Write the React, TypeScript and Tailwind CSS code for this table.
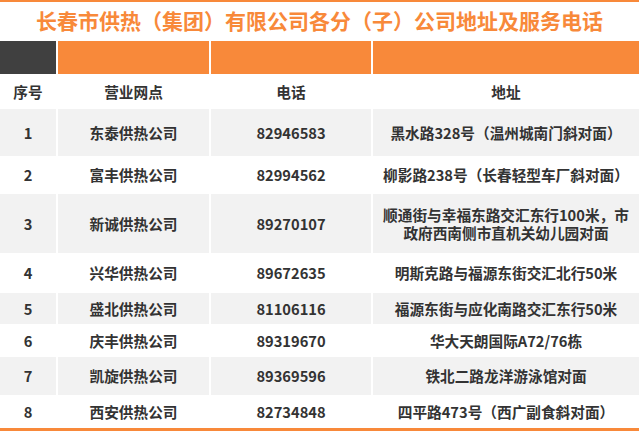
const rows = [
  { no: "1", name: "东泰供热公司", tel: "82946583", addr: "黑水路328号（温州城南门斜对面）", h: "h-[47px]" },
  { no: "2", name: "富丰供热公司", tel: "82994562", addr: "柳影路238号（长春轻型车厂斜对面）", h: "h-[38px]" },
  { no: "3", name: "新诚供热公司", tel: "89270107", addr: "顺通街与幸福东路交汇东行100米，市政府西南侧市直机关幼儿园对面", h: "h-[59px]" },
  { no: "4", name: "兴华供热公司", tel: "89672635", addr: "明斯克路与福源东街交汇北行50米", h: "h-[40px]" },
  { no: "5", name: "盛北供热公司", tel: "81106116", addr: "福源东街与应化南路交汇东行50米", h: "h-[31px]" },
  { no: "6", name: "庆丰供热公司", tel: "89319670", addr: "华大天朗国际A72/76栋", h: "h-[33px]" },
  { no: "7", name: "凯旋供热公司", tel: "89369596", addr: "铁北二路龙洋游泳馆对面", h: "h-[38px]" },
  { no: "8", name: "西安供热公司", tel: "82734848", addr: "四平路473号（西广副食斜对面）", h: "h-[33px]" },
];

const cols = "grid grid-cols-[56px_151px_160px_1fr] gap-x-[2px]";

export default function App() {
  return (
    <main
      className="w-[639px] h-[431px] overflow-hidden bg-white text-[#333333] flex flex-col"
      style={{ fontFamily: '"Noto Sans CJK SC", "Noto Sans", sans-serif' }}
    >
      {/* top accent */}
      <div className="h-[2px] bg-[#f8893a]" />

      {/* title */}
      <h1 className="h-[39px] flex items-center justify-center text-[21px] leading-none font-bold text-[#f8893a] pb-[2px]">
        长春市供热（集团）有限公司各分（子）公司地址及服务电话
      </h1>

      {/* colour band */}
      <div className={`${cols} h-[33px]`}>
        <div className="bg-[#404040]" />
        <div className="bg-[#f8893a]" />
        <div className="bg-[#f8893a]" />
        <div className="bg-[#f8893a]" />
      </div>

      {/* column heads */}
      <div className={`${cols} h-[35px] text-[14.67px] font-bold`}>
        <div className="flex items-center justify-center">序号</div>
        <div className="flex items-center justify-center">营业网点</div>
        <div className="flex items-center justify-center">电话</div>
        <div className="flex items-center justify-center">地址</div>
      </div>

      {/* body */}
      {rows.map((r, i) => {
        const bg = i % 2 === 0 ? "bg-[#f2f2f2]" : "bg-white";
        return (
          <div key={r.no} className={`${cols} ${r.h} text-[14.67px] font-bold leading-[18px]`}>
            <div className={`${bg} flex items-center justify-center`}>{r.no}</div>
            <div className={`${bg} flex items-center justify-center`}>{r.name}</div>
            <div className={`${bg} flex items-center justify-center`}>{r.tel}</div>
            <div className={`${bg} flex items-center justify-center text-center px-[6px]`}>{r.addr}</div>
          </div>
        );
      })}

      {/* bottom accent */}
      <div className="h-[3px] bg-[#f8893a]" />
    </main>
  );
}
